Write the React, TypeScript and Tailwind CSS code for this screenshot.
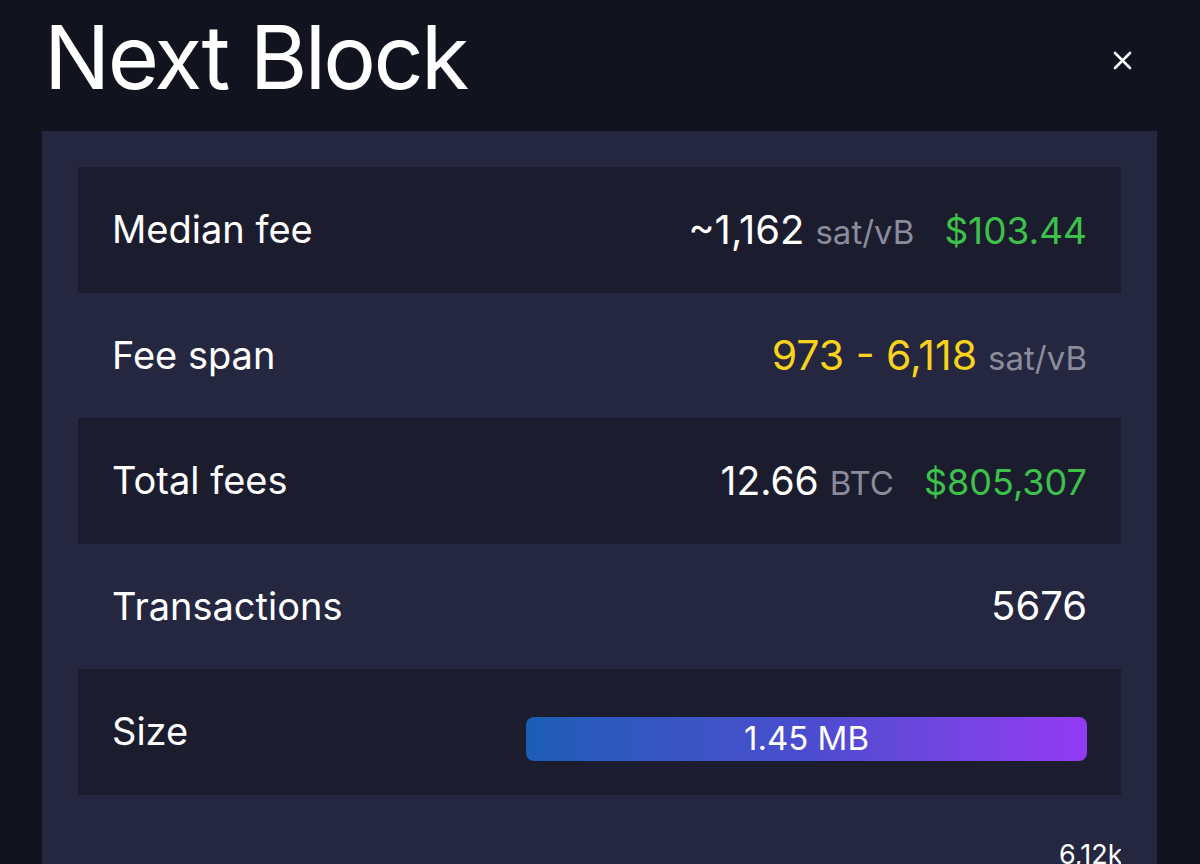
const font = { fontFamily: 'Inter, "Liberation Sans", sans-serif' };

function Row({ label, dark, children }: { label: string; dark?: boolean; children: React.ReactNode }) {
    return (
        <div
            className={`flex h-[125.5px] items-center justify-between px-[34px] ${dark ? 'bg-[#1b1d2f]' : ''}`}
        >
            <span className="text-[38px] text-white">{label}</span>
            {children}
        </div>
    );
}

export default function App() {
    return (
        <div className="h-[864px] overflow-hidden bg-[#11131f] px-[42px]" style={font}>
            <div className="flex h-[131px] items-start justify-between">
                <h1 className="mt-[13px] ml-[2px] text-[88px] font-normal leading-none tracking-[-0.03em] text-white">
                    Next Block
                </h1>
                <button className="mt-[51px] mr-[26px] text-white">
                    <svg width="19" height="19" viewBox="0 0 19 19" fill="none">
                        <path d="M2 2L17 17M17 2L2 17" stroke="white" strokeWidth="2.6" strokeLinecap="round" />
                    </svg>
                </button>
            </div>

            <div className="w-[1115px] bg-[#252740] px-[36px] pt-[36px] pb-[40px]">
                <Row label="Median fee" dark>
                    <div className="flex items-baseline">
                        <span className="text-[40px] text-white">~1,162</span>
                        <span className="ml-[11px] text-[33px] text-[#8a8c9c]">sat/vB</span>
                        <span className="ml-[30px] text-[37px] text-[#3cc24a]">$103.44</span>
                    </div>
                </Row>
                <Row label="Fee span">
                    <div className="flex items-baseline">
                        <span className="text-[41px] text-[#f8d31a]">973 - 6,118</span>
                        <span className="ml-[11px] text-[33px] text-[#8a8c9c]">sat/vB</span>
                    </div>
                </Row>
                <Row label="Total fees" dark>
                    <div className="flex items-baseline">
                        <span className="text-[39px] text-white">12.66</span>
                        <span className="ml-[11px] text-[33px] text-[#8a8c9c]">BTC</span>
                        <span className="ml-[30px] text-[36px] text-[#3cc24a]">$805,307</span>
                    </div>
                </Row>
                <Row label="Transactions">
                    <span className="text-[40px] text-white">5676</span>
                </Row>
                <Row label="Size" dark>
                    <div className="mt-[14px] flex h-[44px] w-[561px] items-center justify-center rounded-[8px] bg-gradient-to-r from-[#1a5db6] via-[#4a4ccf] to-[#9339f3]">
                        <span className="text-[33px] leading-none text-white">1.45 MB</span>
                    </div>
                </Row>
                <div className="overflow-hidden whitespace-nowrap pt-[46px] pl-[981px] text-[27px] leading-none text-white">
                    6,12k
                </div>
            </div>
        </div>
    );
}
